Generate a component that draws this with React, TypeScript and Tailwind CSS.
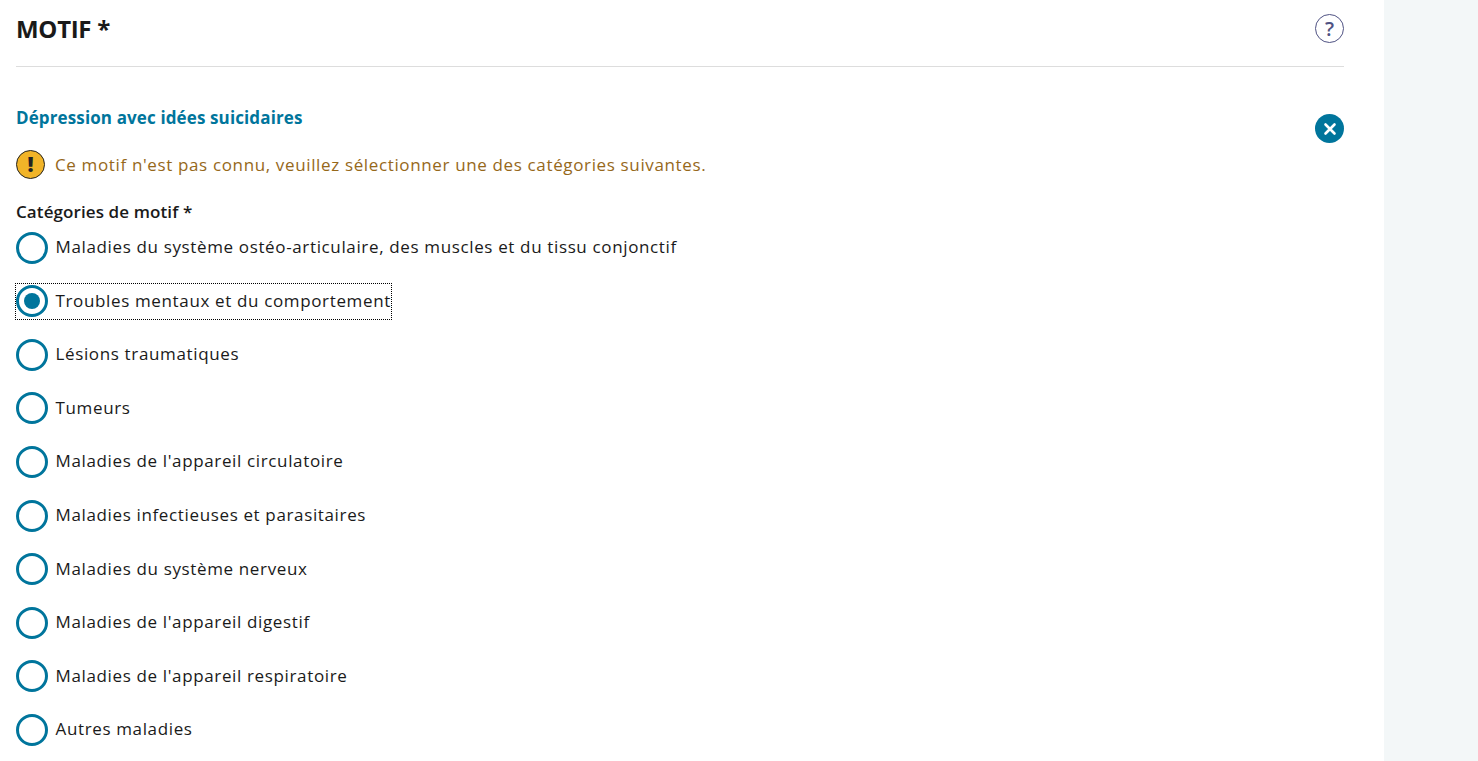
const categories = [
  "Maladies du système ostéo-articulaire, des muscles et du tissu conjonctif",
  "Troubles mentaux et du comportement",
  "Lésions traumatiques",
  "Tumeurs",
  "Maladies de l'appareil circulatoire",
  "Maladies infectieuses et parasitaires",
  "Maladies du système nerveux",
  "Maladies de l'appareil digestif",
  "Maladies de l'appareil respiratoire",
  "Autres maladies",
];

function Radio({ label, checked }: { label: string; checked?: boolean }) {
  return (
    <div className="h-[53.6px] shrink-0">
      <div className={"inline-flex items-center gap-[7.5px] h-[35px] -mt-[1.5px] " + (checked ? "outline outline-1 outline-dotted outline-black" : "")}>
        <span className="w-8 h-8 rounded-full border-[3px] border-[#00759c] flex items-center justify-center shrink-0">
          {checked && <span className="w-4 h-4 rounded-full bg-[#00759c]" />}
        </span>
        <span className="text-[17px] tracking-[0.64px] text-[#1a1a1a] relative -top-px">{label}</span>
      </div>
    </div>
  );
}

export default function App() {
  return (
    <div className="h-[761px] overflow-hidden bg-[#f3f7f8] font-['Open_Sans',sans-serif]">
      <div className="w-[1384px] h-full bg-white pl-4 flex flex-col">
        <div className="h-[67px] w-[1328px] shrink-0 border-b border-[#dddddd] flex items-start justify-between pt-[11px]">
          <h1 className="text-[24px] leading-[36px] font-bold tracking-[-0.3px] text-[#1a1a1a]">MOTIF *</h1>
          <span className="w-[29px] h-[29px] mt-[3px] rounded-full border border-[#4f5283] flex items-center justify-center text-[#4f5283] text-[20px] font-semibold">?</span>
        </div>
        <div className="flex items-start justify-between mt-[38px] w-[1328px]">
          <div>
            <div className="text-[17px] leading-[26px] font-bold tracking-[0.12px] text-[#00759c]">Dépression avec idées suicidaires</div>
            <div className="flex items-center gap-[10px] mt-[19px]">
              <span className="w-[29px] h-[29px] rounded-full bg-[#f1b428] border border-[#222222] flex items-center justify-center text-[21px] font-extrabold text-[#222222]">!</span>
              <span className="text-[17px] tracking-[0.64px] text-[#96681a]">Ce motif n'est pas connu, veuillez sélectionner une des catégories suivantes.</span>
            </div>
          </div>
          <span className="w-[29px] h-[29px] mt-[9px] rounded-full bg-[#00759c] flex items-center justify-center">
            <svg width="14" height="14" viewBox="0 0 14 14" fill="none" stroke="white" strokeWidth="2.6" strokeLinecap="round">
              <path d="M2.5 2.5L11.5 11.5M11.5 2.5L2.5 11.5" />
            </svg>
          </span>
        </div>
        <div className="text-[17px] leading-[24px] font-semibold tracking-[0.1px] text-[#1a1a1a] mt-[21px]">Catégories de motif *</div>
        <div className="flex flex-col mt-[7.7px]">
          {categories.map((c, i) => (
            <Radio key={c} label={c} checked={i === 1} />
          ))}
        </div>
      </div>
    </div>
  );
}
